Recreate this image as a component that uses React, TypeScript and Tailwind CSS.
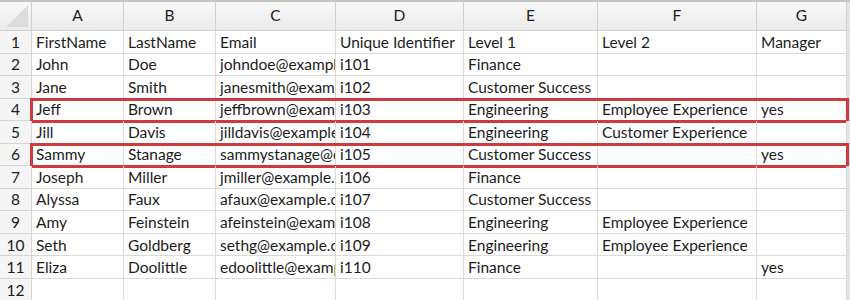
const cols = [
  { key: "A", w: "w-[92px]" },
  { key: "B", w: "w-[92px]" },
  { key: "C", w: "w-[120px]" },
  { key: "D", w: "w-[128px]" },
  { key: "E", w: "w-[134px]" },
  { key: "F", w: "w-[159px]" },
  { key: "G", w: "w-[90px]" },
];

const rows: string[][] = [
  ["FirstName", "LastName", "Email", "Unique Identifier", "Level 1", "Level 2", "Manager"],
  ["John", "Doe", "johndoe@example.com", "i101", "Finance", "", ""],
  ["Jane", "Smith", "janesmith@example.com", "i102", "Customer Success", "", ""],
  ["Jeff", "Brown", "jeffbrown@example.com", "i103", "Engineering", "Employee Experience", "yes"],
  ["Jill", "Davis", "jilldavis@example.com", "i104", "Engineering", "Customer Experience", ""],
  ["Sammy", "Stanage", "sammystanage@example.com", "i105", "Customer Success", "", "yes"],
  ["Joseph", "Miller", "jmiller@example.com", "i106", "Finance", "", ""],
  ["Alyssa", "Faux", "afaux@example.com", "i107", "Customer Success", "", ""],
  ["Amy", "Feinstein", "afeinstein@example.com", "i108", "Engineering", "Employee Experience", ""],
  ["Seth", "Goldberg", "sethg@example.com", "i109", "Engineering", "Employee Experience", ""],
  ["Eliza", "Doolittle", "edoolittle@example.com", "i110", "Finance", "", "yes"],
  ["", "", "", "", "", "", ""],
];

const highlighted = [4, 6];

export default function App() {
  return (
    <div className="h-[300px] w-[850px] overflow-hidden bg-white font-['Lato','Liberation_Sans',sans-serif] text-[15.5px] text-[#1c1c1c]">
      <div className="flex border-t-2 border-[#c4c4c4]">
        <div className="relative h-[29px] w-[32px] shrink-0 border-b border-r border-[#cfcfcf] bg-gradient-to-b from-[#f8f8f8] to-[#ebebeb]">
          <svg className="absolute bottom-[3px] right-[3px]" width="22" height="22" viewBox="0 0 22 22">
            <polygon points="22,0 22,22 0,22" fill="#dcdcdc" />
          </svg>
        </div>
        {cols.map((c) => (
          <div
            key={c.key}
            className={`${c.w} flex h-[29px] shrink-0 items-center justify-center border-b border-r border-[#cfcfcf] bg-gradient-to-b from-[#f8f8f8] to-[#ebebeb]`}
          >
            {c.key}
          </div>
        ))}
        <div className="h-[29px] flex-1 border-b border-[#cfcfcf] bg-[#e4e4e4]" />
      </div>
      {rows.map((r, i) => {
        const n = i + 1;
        return (
          <div key={n} className="relative flex h-[22.55px]">
            <div className="flex w-[32px] shrink-0 items-center justify-center border-b border-r border-[#d4d4d4] bg-[#f5f5f5] pt-[1px]">
              {n}
            </div>
            {cols.map((c, j) => (
              <div
                key={c.key}
                className={`${c.w} flex shrink-0 items-center overflow-hidden whitespace-nowrap border-b border-r border-[#dadada] pl-[4px] pt-[1px]`}
              >
                {r[j]}
              </div>
            ))}
            <div className="flex-1 border-b border-[#dadada] bg-[#e4e4e4]" />
            {highlighted.includes(n) && (
              <div className="absolute bottom-[-2px] left-[30px] right-[1px] top-[-1px] border-[3px] border-[#d2393f]" />
            )}
          </div>
        );
      })}
    </div>
  );
}
